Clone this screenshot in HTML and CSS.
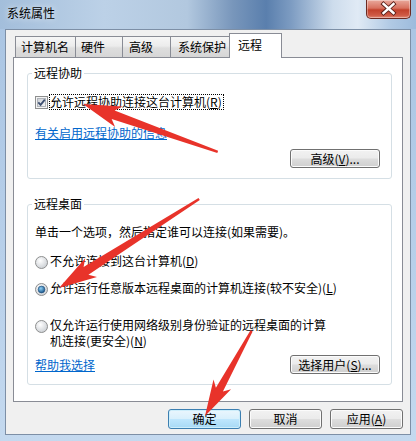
FILE: index.html
```html
<!DOCTYPE html>
<html lang="zh-CN">
<head>
<meta charset="utf-8">
<title>系统属性</title>
<link rel="stylesheet" href="styles.css">
</head>
<body>
<div class="window">
  <div class="titlebar">
    <span class="title">系统属性</span>
    <div class="close">
      <svg width="45" height="19" viewBox="0 0 45 19">
        <path d="M17.5 5 L27.5 14 M27.5 5 L17.5 14" stroke="#5a2019" stroke-width="4.2" stroke-linecap="square"/>
        <path d="M17.5 5 L27.5 14 M27.5 5 L17.5 14" stroke="#ffffff" stroke-width="2.4" stroke-linecap="square"/>
      </svg>
    </div>
  </div>
  <div class="client">
    <div class="tabs">
      <div class="tab t1">计算机名</div>
      <div class="tab t2">硬件</div>
      <div class="tab t3">高级</div>
      <div class="tab t4">系统保护</div>
      <div class="tab t5 active">远程</div>
    </div>
    <div class="panel">
      <fieldset class="group g1">
        <legend>远程协助</legend>
        <div class="check-row">
          <svg class="box" width="13" height="13" viewBox="0 0 13 13">
            <defs>
              <linearGradient id="cb" x1="0" y1="0" x2="1" y2="1">
                <stop offset="0" stop-color="#cbcfd5"/>
                <stop offset="1" stop-color="#f7f7f7"/>
              </linearGradient>
            </defs>
            <rect x="0.5" y="0.5" width="12" height="12" fill="#f4f4f4" stroke="#8e8f8f"/>
            <rect x="2.5" y="2.5" width="8" height="8" fill="url(#cb)" stroke="#b0b4ba" stroke-width="1"/>
            <path d="M3.3 6.4 L5.6 8.8 L9.8 3.6" fill="none" stroke="#3d4f70" stroke-width="1.8"/>
          </svg>
          <span class="focus">允许远程协助连接这台计算机(<u>R</u>)</span>
        </div>
        <a class="link first-link">有关启用远程协助的信息</a>
        <div class="btn-row end">
          <button class="btn wide">高级(<u>V</u>)...</button>
        </div>
      </fieldset>
      <fieldset class="group g2">
        <legend>远程桌面</legend>
        <div class="desc">单击一个选项，然后指定谁可以连接(如果需要)。</div>
        <div class="radio-row r1">
          <svg class="radio" width="13" height="13" viewBox="0 0 13 13">
            <defs>
              <radialGradient id="rg" cx="0.4" cy="0.35" r="0.7">
                <stop offset="0" stop-color="#ffffff"/>
                <stop offset="1" stop-color="#c9cdd2"/>
              </radialGradient>
            </defs>
            <circle cx="6.5" cy="6.5" r="6" fill="url(#rg)" stroke="#8e8f8f"/>
          </svg>
          <span class="rtext">不允许连接到这台计算机(<u>D</u>)</span>
        </div>
        <div class="radio-row r2">
          <svg class="radio" width="13" height="13" viewBox="0 0 13 13">
            <defs>
              <radialGradient id="rd" cx="0.4" cy="0.35" r="0.7">
                <stop offset="0" stop-color="#8fd0f5"/>
                <stop offset="1" stop-color="#134f85"/>
              </radialGradient>
            </defs>
            <circle cx="6.5" cy="6.5" r="6" fill="url(#rg)" stroke="#8e8f8f"/>
            <circle cx="6.5" cy="6.5" r="3.4" fill="url(#rd)" stroke="#1d4a77" stroke-width="0.6"/>
          </svg>
          <span class="rtext">允许运行任意版本远程桌面的计算机连接(较不安全)(<u>L</u>)</span>
        </div>
        <div class="radio-row r3">
          <svg class="radio" width="13" height="13" viewBox="0 0 13 13">
            <circle cx="6.5" cy="6.5" r="6" fill="url(#rg)" stroke="#8e8f8f"/>
          </svg>
          <span class="rtext narrow">
            <span class="line">仅允许运行使用网络级别身份验证的远程桌面的计算</span>
            <span class="line">机连接(更安全)(<u>N</u>)</span>
          </span>
        </div>
        <div class="btn-row split">
          <a class="link">帮助我选择</a>
          <button class="btn wide">选择用户(<u>S</u>)...</button>
        </div>
      </fieldset>
    </div>
    <div class="footer">
      <button class="btn foot default">确定</button>
      <button class="btn foot">取消</button>
      <button class="btn foot">应用(<u>A</u>)</button>
    </div>
  </div>
  <svg class="arrows" width="416" height="441" viewBox="0 0 416 441">
    <g fill="#e8332a">
      <path transform="translate(83 104) rotate(19.6)" d="M0 0 L38 -11 L32 -4.5 L143 -1.2 L143 1.2 L32 4.5 L38 11 Z"/>
      <path transform="translate(59 288) rotate(-32.4)" d="M0 0 L38 -11 L32 -4.5 L166 -1.2 L166 1.2 L32 4.5 L38 11 Z"/>
      <path transform="translate(205 416) rotate(-61.3)" d="M0 0 L36 -10 L30 -4 L97 -1.2 L97 1.2 L30 4 L36 10 Z"/>
    </g>
  </svg>
</div>
</body>
</html>
```
FILE: styles.css
```css
html, body {
  margin: 0;
  padding: 0;
}
body {
  width: 416px;
  height: 441px;
  overflow: hidden;
  font-family: "Noto Sans CJK SC", "Microsoft YaHei", sans-serif;
  font-size: 12px;
  line-height: 14px;
  color: #000;
}
u {
  display: inline-block;
  line-height: 14px;
}
.window {
  position: relative;
  width: 416px;
  height: 441px;
  box-sizing: border-box;
  padding: 0 5px 6px 5px;
  display: flex;
  flex-direction: column;
  background: linear-gradient(180deg, #a9c4e2 0%, #b8d0ea 60%, #c4d9ef 100%);
}
.window::before {
  content: "";
  position: absolute;
  left: 0;
  top: 0;
  right: 0;
  height: 29px;
  background: linear-gradient(90deg, #a3bedb 0%, #bcd1e7 25%, #b2c8df 45%, #7896bb 56%, #5a7fad 64%, #7d9cc2 70%, #cddcec 80%, #e0eaf5 86%, #b0c9e4 94%, #9dbbdc 100%);
  z-index: 0;
}
.titlebar {
  position: relative;
  z-index: 1;
  height: 29px;
  display: flex;
  justify-content: space-between;
  align-items: flex-start;
  padding-left: 2px;
}
.title {
  padding-top: 6px;
  line-height: 14px;
  text-shadow: 0 0 6px rgba(255,255,255,0.9);
}
.close {
  width: 45px;
  height: 19px;
  box-sizing: border-box;
  border: 1px solid #6b2a22;
  border-top: none;
  border-radius: 0 0 5px 5px;
  background: linear-gradient(180deg, #e9a99c 0%, #d8715f 45%, #c2412c 55%, #cf5a45 85%, #e08a76 100%);
  box-shadow: inset 0 0 0 1px rgba(255,255,255,0.35);
  overflow: hidden;
}
.close svg {
  display: block;
  margin: -1px 0 0 -1px;
}
.client {
  position: relative;
  z-index: 1;
  flex: 1;
  border: 1px solid #7d8fa6;
  background: #f0f0f0;
  padding: 0 7px;
  display: flex;
  flex-direction: column;
}
.tabs {
  display: flex;
  align-items: flex-end;
  height: 24px;
  margin-top: 3px;
  padding-left: 2px;
  position: relative;
  z-index: 2;
}
.tab {
  box-sizing: border-box;
  height: 21px;
  padding: 3px 0 0 5px;
  border: 1px solid #898c95;
  border-bottom: none;
  margin-left: -1px;
  background: linear-gradient(180deg, #f6f6f6 0%, #ececec 45%, #dedede 55%, #d6d6d6 100%);
}
.t1 { width: 61px; margin-left: 0; }
.t2 { width: 48px; padding-left: 5px; }
.t3 { width: 49px; padding-left: 6px; }
.t4 { width: 60px; padding-left: 7px; }
.t5 { width: 53px; padding-left: 8px; }
.tab.active {
  height: 25px;
  padding-top: 4px;
  margin-bottom: -1px;
  background: #fff;
  position: relative;
  z-index: 3;
}
.panel {
  border: 1px solid #898c95;
  background: #fff;
  padding: 8px 10px 16px 13px;
}
.group {
  margin: 0;
  padding: 0 11px 10px 7px;
  border: 1px solid #d5dfe5;
  border-radius: 3px;
  min-width: 0;
}
.group legend {
  padding: 0 2px;
  margin-left: -3px;
  line-height: 14px;
}
.g2 {
  margin-top: 18px;
}
.check-row {
  display: flex;
  align-items: center;
  margin-top: 14px;
}
.box {
  display: block;
  margin-right: 1px;
}
.focus {
  border: 1px dotted #000;
  padding-right: 1px;
  line-height: 14px;
}
.link {
  display: block;
  width: fit-content;
  color: #0066cc;
  text-decoration: underline;
  cursor: pointer;
}
.first-link {
  margin-top: 16px;
}
.btn-row {
  display: flex;
  align-items: center;
  margin-top: 9px;
}
.btn-row.end {
  justify-content: flex-end;
}
.btn-row.split {
  justify-content: space-between;
  margin-top: 6px;
}
.btn {
  font-family: inherit;
  font-size: 12px;
  line-height: 14px;
  color: #000;
  padding: 0;
  box-sizing: border-box;
  border: 1px solid #707070;
  border-radius: 3px;
  background: linear-gradient(180deg, #f2f2f2 0%, #ebebeb 48%, #dddddd 52%, #cfcfcf 100%);
  box-shadow: inset 0 0 0 1px #fbfbfb;
}
.btn.wide {
  width: 90px;
  height: 19px;
}
.desc {
  margin-top: 14px;
}
.radio-row {
  display: flex;
  align-items: flex-start;
}
.radio {
  display: block;
  flex: none;
  margin-top: 2px;
  margin-right: 2px;
}
.r1 { margin-top: 15px; }
.r2 { margin-top: 12px; }
.r3 { margin-top: 21px; }
.r3 .radio { margin-top: 3px; }
.rtext.narrow {
  display: block;
  line-height: 16px;
}
.rtext .line {
  display: block;
  white-space: nowrap;
}
.footer {
  display: flex;
  justify-content: flex-end;
  gap: 8px;
  margin-top: 7px;
}
.btn.foot {
  width: 73px;
  height: 20px;
}
.btn.default {
  border-color: #3c7fb1;
  box-shadow: inset 0 0 0 1px #cdeefb;
  background: linear-gradient(180deg, #eaf6fd 0%, #d9f0fc 48%, #bee6fd 52%, #a7d9f5 100%);
}
.arrows {
  position: absolute;
  left: 0;
  top: 0;
  z-index: 10;
  pointer-events: none;
}
```
